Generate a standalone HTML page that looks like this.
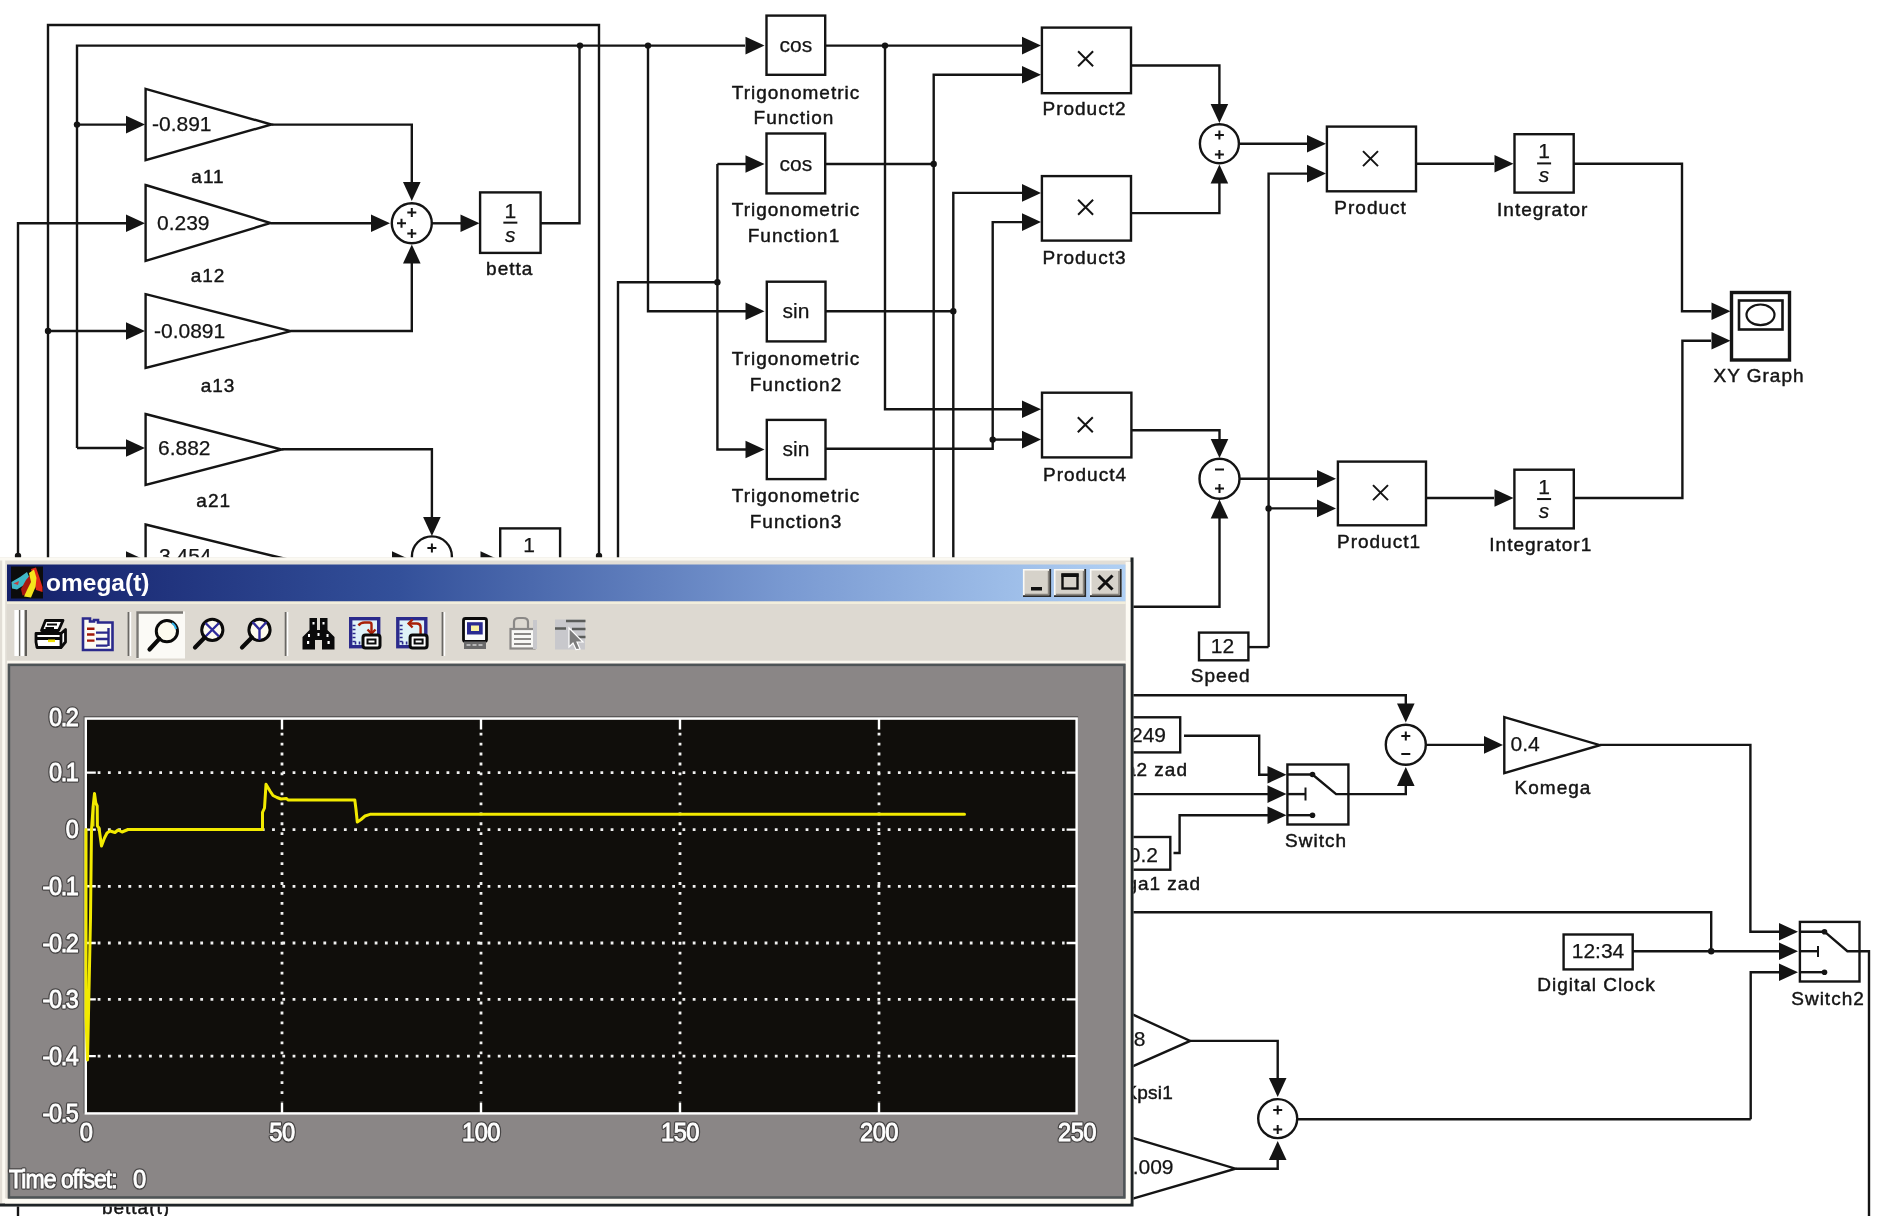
<!DOCTYPE html>
<html><head><meta charset="utf-8">
<style>
html,body{margin:0;padding:0;background:#fff;}
body{width:1890px;height:1216px;overflow:hidden;position:relative;font-family:"Liberation Sans",sans-serif;}
svg{position:absolute;left:0;top:0;will-change:transform;}
#dg polyline,#dg rect,#dg polygon,#dg circle{fill:none;stroke:#141414;stroke-width:2.4;stroke-linejoin:miter;}
#dg .a{fill:#141414;stroke:none;}
#dg .sg{stroke:#141414;stroke-width:2;fill:none;}
#dg .tm{stroke:#141414;stroke-width:2;fill:none;}
#dg text{fill:#141414;font-family:"Liberation Sans",sans-serif;}
#dg .lb{font-size:19px;letter-spacing:1px;stroke:#141414;stroke-width:0.45px;}
#dg .vl{font-size:21px;stroke:#141414;stroke-width:0.25px;}
#dg .it{font-style:italic;}
#wn .pl{font-family:"Liberation Sans",sans-serif;font-size:25.5px;fill:#fff;stroke:#fff;stroke-width:0.9px;}
#wn .plh{font-family:"Liberation Sans",sans-serif;font-size:25.5px;fill:none;stroke:#474545;stroke-width:3.6px;stroke-linejoin:round;}
</style></head><body>
<svg id="dg" width="1890" height="1216" viewBox="0 0 1890 1216">
<polyline points="48,560 48,25 599,25 599,560"/>
<circle class="a" cx="599" cy="556" r="3.2"/>
<polyline points="77,448 77,45.6 745,45.6"/>
<circle class="a" cx="580" cy="45.6" r="3.2"/>
<circle class="a" cx="648" cy="45.6" r="3.2"/>
<polyline points="18,560 18,223.3 127,223.3"/>
<polygon class="a" points="145.0,223.3 126.0,214.5 126.0,232.1"/>
<circle class="a" cx="18" cy="556" r="3.2"/>
<polyline points="77,124.6 127,124.6"/>
<polygon class="a" points="145.0,124.6 126.0,115.8 126.0,133.4"/>
<circle class="a" cx="77" cy="124.6" r="3.2"/>
<polygon points="145.6,88.8 271.4,124.5 145.6,160.2"/>
<text class="vl" x="152" y="131" text-anchor="start">-0.891</text>
<text class="lb" x="208" y="182.6" text-anchor="middle">a11</text>
<polyline points="271.4,124.6 411.8,124.6 411.8,184"/>
<polygon class="a" points="411.8,201.0 403.0,182.0 420.6,182.0"/>
<polygon points="145.6,185 270.5,223.0 145.6,261"/>
<text class="vl" x="157" y="230" text-anchor="start">0.239</text>
<text class="lb" x="208" y="282" text-anchor="middle">a12</text>
<polyline points="270.5,223.3 372,223.3"/>
<polygon class="a" points="390.0,223.3 371.0,214.5 371.0,232.1"/>
<polyline points="48,331 127,331"/>
<polygon class="a" points="145.0,331.0 126.0,322.2 126.0,339.8"/>
<circle class="a" cx="48" cy="331" r="3.2"/>
<polygon points="145.6,294.2 290.8,331.04999999999995 145.6,367.9"/>
<text class="vl" x="154" y="338" text-anchor="start">-0.0891</text>
<text class="lb" x="218" y="391.6" text-anchor="middle">a13</text>
<polyline points="290.8,331 411.8,331 411.8,262"/>
<polygon class="a" points="411.8,244.5 403.0,263.5 420.6,263.5"/>
<circle cx="411.8" cy="223.3" r="20"/>
<path class="sg" d="M407.3,212.5H416.3M411.8,208.0V217.0"/>
<path class="sg" d="M397.0,223.3H406.0M401.5,218.8V227.8"/>
<path class="sg" d="M407.3,233.5H416.3M411.8,229.0V238.0"/>
<polyline points="431.8,223.3 461,223.3"/>
<polygon class="a" points="479.5,223.3 460.5,214.5 460.5,232.1"/>
<rect x="480.1" y="192.4" width="60.5" height="60.5"/>
<text class="vl" x="510.35" y="217.65" text-anchor="middle">1</text>
<path class="sg" d="M503.35,222.65H517.35"/>
<text class="vl it" x="510.35" y="241.65" text-anchor="middle">s</text>
<text class="lb" x="509.7" y="275" text-anchor="middle">betta</text>
<polyline points="540.6,223.3 579.5,223.3 579.5,45.6"/>
<polyline points="77,448 127,448"/>
<polygon class="a" points="145.0,448.0 126.0,439.2 126.0,456.8"/>
<polygon points="145.6,414 281.6,449.5 145.6,485"/>
<text class="vl" x="158" y="455" text-anchor="start">6.882</text>
<text class="lb" x="213.7" y="507" text-anchor="middle">a21</text>
<polyline points="281.6,449.2 431.9,449.2 431.9,519"/>
<polygon class="a" points="431.9,536.0 423.1,517.0 440.7,517.0"/>
<circle cx="431.9" cy="556.4" r="20"/>
<path class="sg" d="M427.4,548H436.4M431.9,543.5V552.5"/>
<polygon class="a" points="411.0,560.0 392.0,551.2 392.0,568.8"/>
<polyline points="380,560 392,560"/>
<polygon points="145.6,524.5 290,560.0 145.6,595.5"/>
<text class="vl" x="159" y="563" text-anchor="start">3.454</text>
<polygon class="a" points="145.0,560.0 126.0,551.2 126.0,568.8"/>
<polyline points="461,560 481,560"/>
<polygon class="a" points="499.5,560.0 480.5,551.2 480.5,568.8"/>
<rect x="500.2" y="528.4" width="59.900000000000034" height="61.60000000000002"/>
<text class="vl" x="529" y="551.5" text-anchor="middle">1</text>
<polyline points="618,560 618,282.2 717.4,282.2"/>
<circle class="a" cx="717.4" cy="282.2" r="3.2"/>
<polyline points="717.4,164 717.4,449.5 746,449.5"/>
<polygon class="a" points="764.5,449.5 745.5,440.7 745.5,458.3"/>
<polyline points="717.4,164 746,164"/>
<polygon class="a" points="764.5,164.0 745.5,155.2 745.5,172.8"/>
<polygon class="a" points="764.5,45.6 745.5,36.8 745.5,54.4"/>
<polyline points="648,45.6 648,311.3 746,311.3"/>
<polygon class="a" points="764.5,311.3 745.5,302.5 745.5,320.1"/>
<rect x="766.5" y="15.6" width="58.700000000000045" height="59.199999999999996"/>
<text class="vl" x="795.8" y="52" text-anchor="middle">cos</text>
<rect x="766.5" y="133.5" width="58.700000000000045" height="59.900000000000006"/>
<text class="vl" x="795.8" y="170.5" text-anchor="middle">cos</text>
<rect x="766.8" y="281.7" width="58.700000000000045" height="59.69999999999999"/>
<text class="vl" x="796" y="318" text-anchor="middle">sin</text>
<rect x="766.8" y="419.9" width="58.700000000000045" height="59.200000000000045"/>
<text class="vl" x="796" y="456" text-anchor="middle">sin</text>
<text class="lb" x="796" y="99" text-anchor="middle">Trigonometric</text>
<text class="lb" x="794" y="124.3" text-anchor="middle">Function</text>
<text class="lb" x="796" y="216.4" text-anchor="middle">Trigonometric</text>
<text class="lb" x="794" y="241.7" text-anchor="middle">Function1</text>
<text class="lb" x="796" y="364.9" text-anchor="middle">Trigonometric</text>
<text class="lb" x="796" y="390.8" text-anchor="middle">Function2</text>
<text class="lb" x="796" y="502" text-anchor="middle">Trigonometric</text>
<text class="lb" x="796" y="527.6" text-anchor="middle">Function3</text>
<polyline points="825.2,45.6 1022,45.6"/>
<polygon class="a" points="1041.0,45.6 1022.0,36.8 1022.0,54.4"/>
<circle class="a" cx="885" cy="45.6" r="3.2"/>
<polyline points="885,45.6 885,409.3 1022,409.3"/>
<polygon class="a" points="1041.0,409.3 1022.0,400.5 1022.0,418.1"/>
<polyline points="825.2,164 933.7,164"/>
<circle class="a" cx="933.7" cy="164" r="3.2"/>
<polyline points="933.7,560 933.7,74.8 1022,74.8"/>
<polygon class="a" points="1041.0,74.8 1022.0,66.0 1022.0,83.6"/>
<polyline points="825.5,311.3 953.3,311.3"/>
<circle class="a" cx="953.3" cy="311.3" r="3.2"/>
<polyline points="953.3,560 953.3,192.9 1022,192.9"/>
<polygon class="a" points="1041.0,192.9 1022.0,184.1 1022.0,201.7"/>
<polyline points="825.5,448.8 992.7,448.8 992.7,222.1 1022,222.1"/>
<polygon class="a" points="1041.0,222.1 1022.0,213.3 1022.0,230.9"/>
<polyline points="992.7,439.6 1022,439.6"/>
<polygon class="a" points="1041.0,439.6 1022.0,430.8 1022.0,448.4"/>
<circle class="a" cx="992.7" cy="439.6" r="3.2"/>
<rect x="1041.9" y="27.6" width="89.09999999999991" height="65.6"/>
<path class="tm" d="M1078.1,51.2L1093.1,66.2M1093.1,51.2L1078.1,66.2"/>
<text class="lb" x="1084.5" y="115" text-anchor="middle">Product2</text>
<rect x="1041.9" y="176.1" width="89.09999999999991" height="64.5"/>
<path class="tm" d="M1078.1,199.7L1093.1,214.7M1093.1,199.7L1078.1,214.7"/>
<text class="lb" x="1084.5" y="263.6" text-anchor="middle">Product3</text>
<rect x="1042" y="392.7" width="89.40000000000009" height="64.69999999999999"/>
<path class="tm" d="M1077.8,417.3L1092.8,432.3M1092.8,417.3L1077.8,432.3"/>
<text class="lb" x="1085" y="480.8" text-anchor="middle">Product4</text>
<polyline points="1131,65.5 1219.4,65.5 1219.4,104"/>
<polygon class="a" points="1219.4,123.0 1210.6,104.0 1228.2,104.0"/>
<polyline points="1131,213.1 1219.4,213.1 1219.4,183"/>
<polygon class="a" points="1219.4,164.5 1210.6,183.5 1228.2,183.5"/>
<circle cx="1219.4" cy="143.7" r="19.5"/>
<path class="sg" d="M1214.9,135H1223.9M1219.4,130.5V139.5"/>
<path class="sg" d="M1214.9,154.5H1223.9M1219.4,150.0V159.0"/>
<polyline points="1239,143.7 1307,143.7"/>
<polygon class="a" points="1326.0,143.7 1307.0,134.9 1307.0,152.5"/>
<rect x="1326.9" y="126.6" width="89.09999999999991" height="64.70000000000002"/>
<path class="tm" d="M1363.0,151.1L1378.0,166.1M1378.0,151.1L1363.0,166.1"/>
<text class="lb" x="1370.6" y="214.2" text-anchor="middle">Product</text>
<polyline points="1268.6,647.1 1268.6,173.6 1307,173.6"/>
<polygon class="a" points="1326.0,173.6 1307.0,164.8 1307.0,182.4"/>
<polyline points="1416,163.7 1494,163.7"/>
<polygon class="a" points="1513.5,163.7 1494.5,154.9 1494.5,172.5"/>
<rect x="1514.5" y="134.2" width="59.200000000000045" height="58.400000000000006"/>
<text class="vl" x="1544.1" y="158.39999999999998" text-anchor="middle">1</text>
<path class="sg" d="M1537.1,163.39999999999998H1551.1"/>
<text class="vl it" x="1544.1" y="182.39999999999998" text-anchor="middle">s</text>
<text class="lb" x="1542.7" y="216" text-anchor="middle">Integrator</text>
<polyline points="1573.7,163.7 1682,163.7 1682,311.3 1711,311.3"/>
<polygon class="a" points="1730.5,311.3 1711.5,302.5 1711.5,320.1"/>
<polyline points="1573.8,498 1682.4,498 1682.4,340.8 1711,340.8"/>
<polygon class="a" points="1730.5,340.8 1711.5,332.0 1711.5,349.6"/>
<rect x="1731.5" y="292.5" width="58" height="67.5" style="stroke-width:3.4"/>
<rect x="1739" y="300.5" width="43.5" height="29" style="stroke-width:2.6"/>
<ellipse cx="1760.5" cy="314.8" rx="14" ry="10.3" style="fill:none;stroke:#141414;stroke-width:2.2"/>
<text class="lb" x="1759" y="381.5" text-anchor="middle">XY Graph</text>
<polyline points="1131.4,430.2 1219.5,430.2 1219.5,439"/>
<polygon class="a" points="1219.5,458.0 1210.7,439.0 1228.3,439.0"/>
<circle cx="1219.5" cy="478.7" r="20"/>
<path class="sg" d="M1215.0,469.5H1224.0"/>
<path class="sg" d="M1215.0,488.5H1224.0M1219.5,484.0V493.0"/>
<polyline points="1132,606.8 1219.5,606.8 1219.5,518"/>
<polygon class="a" points="1219.5,499.5 1210.7,518.5 1228.3,518.5"/>
<polyline points="1239.5,478.7 1317,478.7"/>
<polygon class="a" points="1336.0,478.7 1317.0,469.9 1317.0,487.5"/>
<rect x="1337.9" y="461.6" width="88.09999999999991" height="63.69999999999993"/>
<path class="tm" d="M1373.0,485.1L1388.0,500.1M1388.0,485.1L1373.0,500.1"/>
<text class="lb" x="1379" y="548.4" text-anchor="middle">Product1</text>
<polyline points="1268.6,508.4 1317,508.4"/>
<polygon class="a" points="1336.0,508.4 1317.0,499.6 1317.0,517.2"/>
<circle class="a" cx="1268.6" cy="508.4" r="3.2"/>
<polyline points="1426,498 1494,498"/>
<polygon class="a" points="1513.5,498.0 1494.5,489.2 1494.5,506.8"/>
<rect x="1514.4" y="469.7" width="59.399999999999864" height="58.69999999999999"/>
<text class="vl" x="1544.1" y="494.04999999999995" text-anchor="middle">1</text>
<path class="sg" d="M1537.1,499.04999999999995H1551.1"/>
<text class="vl it" x="1544.1" y="518.05" text-anchor="middle">s</text>
<text class="lb" x="1540.8" y="551" text-anchor="middle">Integrator1</text>
<rect x="1199" y="632.6" width="49.40000000000009" height="27.699999999999932"/>
<text class="vl" x="1222.5" y="653" text-anchor="middle">12</text>
<polyline points="1248.4,647.1 1268.6,647.1"/>
<text class="lb" x="1220.7" y="682" text-anchor="middle">Speed</text>
<polyline points="1132,695.2 1405.8,695.2 1405.8,705"/>
<polygon class="a" points="1405.8,722.5 1397.0,703.5 1414.6,703.5"/>
<circle cx="1405.8" cy="744.7" r="20"/>
<path class="sg" d="M1401.3,736H1410.3M1405.8,731.5V740.5"/>
<path class="sg" d="M1401.3,754H1410.3"/>
<polyline points="1351,794.1 1405.8,794.1 1405.8,784"/>
<polygon class="a" points="1405.8,767.0 1397.0,786.0 1414.6,786.0"/>
<polyline points="1426,744.9 1484,744.9"/>
<polygon class="a" points="1503.0,744.9 1484.0,736.1 1484.0,753.7"/>
<polygon points="1504.3,717.2 1600,745.1500000000001 1504.3,773.1"/>
<text class="vl" x="1510.5" y="750.5" text-anchor="start">0.4</text>
<text class="lb" x="1553" y="793.5" text-anchor="middle">Komega</text>
<polyline points="1600,744.9 1750.4,744.9 1750.4,931.7 1779,931.7"/>
<polygon class="a" points="1798.0,931.7 1779.0,922.9 1779.0,940.5"/>
<rect x="1100" y="717.3" width="80.20000000000005" height="35.10000000000002"/>
<text class="vl" x="1166" y="742" text-anchor="end">249</text>
<text class="lb" x="1188" y="775.5" text-anchor="end">a2 zad</text>
<polyline points="1184,735.8 1259.2,735.8 1259.2,774.7 1268,774.7"/>
<polygon class="a" points="1286.5,774.7 1267.5,765.9 1267.5,783.5"/>
<polyline points="1132,794.1 1268,794.1"/>
<polygon class="a" points="1286.5,794.1 1267.5,785.3 1267.5,802.9"/>
<rect x="1100" y="837" width="70.29999999999995" height="32.700000000000045"/>
<text class="vl" x="1158" y="862" text-anchor="end">0.2</text>
<text class="lb" x="1201" y="890" text-anchor="end">ga1 zad</text>
<polyline points="1173.5,853 1179.6,853 1179.6,815.2 1268,815.2"/>
<polygon class="a" points="1286.5,815.2 1267.5,806.4 1267.5,824.0"/>
<text class="lb" x="1201" y="890" text-anchor="end"></text>
<rect x="1287.4" y="764.5" width="61.0" height="60.0"/>
<polyline points="1287.4,774.5 1312.5,774.5 1336.1,794.1 1351,794.1"/>
<circle class="a" cx="1312.5" cy="774.5" r="2.8"/>
<polyline points="1287.4,794.1 1305.5,794.1"/>
<path class="sg" d="M1305.5,787.5V800.5"/>
<polyline points="1287.4,815.2 1312.5,815.2"/>
<circle class="a" cx="1312.5" cy="815.2" r="2.8"/>
<text class="lb" x="1316" y="847" text-anchor="middle">Switch</text>
<polyline points="1132,912.3 1711.2,912.3 1711.2,951.2"/>
<circle class="a" cx="1711.2" cy="951.2" r="3.2"/>
<rect x="1563.6" y="934.5" width="69.10000000000014" height="34.89999999999998"/>
<text class="vl" x="1598" y="957.5" text-anchor="middle">12:34</text>
<text class="lb" x="1596.5" y="991" text-anchor="middle">Digital Clock</text>
<polyline points="1632.7,951.2 1779,951.2"/>
<polygon class="a" points="1798.0,951.2 1779.0,942.4 1779.0,960.0"/>
<polyline points="1750.7,1119.3 1750.7,972.2 1779,972.2"/>
<polygon class="a" points="1798.0,972.2 1779.0,963.4 1779.0,981.0"/>
<rect x="1799.9" y="921.9" width="59.59999999999991" height="59.60000000000002"/>
<polyline points="1799.9,931.7 1824.5,931.7 1847.4,951.2 1869,951.2 1869,1216"/>
<circle class="a" cx="1824.5" cy="931.7" r="2.8"/>
<polyline points="1799.9,951.2 1818,951.2"/>
<path class="sg" d="M1818,946V957"/>
<polyline points="1799.9,972.2 1824.5,972.2"/>
<circle class="a" cx="1824.5" cy="972.2" r="2.8"/>
<text class="lb" x="1828" y="1005" text-anchor="middle">Switch2</text>
<polyline points="1132,1014.2 1190.2,1040.9 1132,1066.6"/>
<text class="vl" x="1145.5" y="1046" text-anchor="end">8</text>
<text class="lb" x="1173" y="1098.5" text-anchor="end" style="letter-spacing:0.2px">Kpsi1</text>
<polyline points="1190.2,1040.9 1277.7,1040.9 1277.7,1081"/>
<polygon class="a" points="1277.7,1097.0 1268.9,1078.0 1286.5,1078.0"/>
<circle cx="1277.7" cy="1118.6" r="19.5"/>
<path class="sg" d="M1273.2,1110H1282.2M1277.7,1105.5V1114.5"/>
<path class="sg" d="M1273.2,1129.5H1282.2M1277.7,1125.0V1134.0"/>
<polyline points="1132,1137.7 1235.5,1168.7 1132,1198.9"/>
<text class="vl" x="1173.5" y="1174" text-anchor="end">.009</text>
<polyline points="1235.5,1168.7 1277.7,1168.7 1277.7,1157.5"/>
<polygon class="a" points="1277.7,1141.0 1268.9,1160.0 1286.5,1160.0"/>
<polyline points="1297.2,1119.3 1750.7,1119.3"/>
<polyline points="18,1200 18,1216"/>
<text class="lb" x="136" y="1213.5" text-anchor="middle">betta(t)</text>
</svg>
<svg id="wn" width="1890" height="1216" viewBox="0 0 1890 1216" style="position:absolute;left:0;top:0">
<defs><linearGradient id="tg" x1="0" x2="1" y1="0" y2="0"><stop offset="0" stop-color="#14206a"/><stop offset="0.35" stop-color="#33509a"/><stop offset="0.7" stop-color="#7a9ad2"/><stop offset="1" stop-color="#b0d0f4"/></linearGradient></defs>
<rect x="0" y="557.5" width="1133.5" height="649" fill="#e2ded6"/>
<path d="M0,559H1131M3.7,559V1203" stroke="#fbf9f2" stroke-width="3" fill="none"/>
<path d="M1132,557.5V1206.5M0,1205H1133.5" stroke="#1e2426" stroke-width="3" fill="none"/>
<path d="M1128,562V1203.5M5,1201H1130" stroke="#fdfbf4" stroke-width="4.8" fill="none"/>
<rect x="7" y="564.5" width="1118.5" height="37" fill="url(#tg)"/>
<rect x="7" y="601.5" width="1118.5" height="2.5" fill="#f2eedc"/>
<rect x="7" y="604" width="1118.5" height="57" fill="#ddd9d1"/>
<rect x="7" y="660.7" width="1118.5" height="3" fill="#fbf8ef"/>
<rect x="7.8" y="663.7" width="1117.7" height="534.9" fill="#8a8686"/>
<rect x="9" y="664.9" width="1115.3" height="532.5" fill="none" stroke="#4e5456" stroke-width="2.4"/>
<rect x="11" y="566.5" width="32" height="32" fill="#0c0c0c"/>
<path d="M11.5,582 L20,577 L27,572 L29.5,578 L24,585 L17,589.5 L12,588.5 Z" fill="#40b8c8"/>
<path d="M13.5,583.5 L19,581 L18,585 Z" fill="#c04040"/>
<path d="M21,589 L26,580 L31,574 L33,582 L29,594 L22.5,595.5 Z" fill="#a81810"/>
<path d="M31,569 L36,567.5 L39,576 L42.5,587 L42.5,592 L36,590 L34,580 Z" fill="#e02818"/>
<path d="M29,573 L34,569.5 L36.5,578 L35.5,587 L31,597.5 L24,596.5 L27,590 L31,582 Z" fill="#f4e41c"/>
<text x="46" y="591" font-family="Liberation Sans" font-weight="bold" font-size="24.5" fill="#ffffff">omega(t)</text>
<rect x="1023" y="569" width="28" height="28" fill="#d6d2ca"/>
<path d="M1023.7,597V569.7H1051" stroke="#fbfaf6" stroke-width="1.6" fill="none"/>
<path d="M1023,596.2H1050.2V569" stroke="#2a2a2a" stroke-width="1.8" fill="none"/>
<path d="M1025,594.5H1048.5V571" stroke="#8a8680" stroke-width="1.4" fill="none"/>
<rect x="1031" y="587" width="11" height="3.5" fill="#101010"/>
<rect x="1054" y="569" width="32" height="28" fill="#d6d2ca"/>
<path d="M1054.7,597V569.7H1086" stroke="#fbfaf6" stroke-width="1.6" fill="none"/>
<path d="M1054,596.2H1085.2V569" stroke="#2a2a2a" stroke-width="1.8" fill="none"/>
<path d="M1056,594.5H1083.5V571" stroke="#8a8680" stroke-width="1.4" fill="none"/>
<rect x="1062.5" y="574.5" width="15" height="14" fill="none" stroke="#101010" stroke-width="2.4"/>
<rect x="1061.5" y="573.5" width="17" height="3.5" fill="#101010"/>
<rect x="1090" y="569" width="31.5" height="28" fill="#d6d2ca"/>
<path d="M1090.7,597V569.7H1121.5" stroke="#fbfaf6" stroke-width="1.6" fill="none"/>
<path d="M1090,596.2H1120.7V569" stroke="#2a2a2a" stroke-width="1.8" fill="none"/>
<path d="M1092,594.5H1119.0V571" stroke="#8a8680" stroke-width="1.4" fill="none"/>
<path d="M1098.5,575.5L1112.5,589.5M1112.5,575.5L1098.5,589.5" stroke="#101010" stroke-width="3"/>
<path d="M84.3,1113.4 V716.8000000000001 H1078.1" stroke="#5a5858" stroke-width="1.6" fill="none"/>
<rect x="85.8" y="718.6" width="990.8" height="394.80000000000007" fill="#100e0b" stroke="#ffffff" stroke-width="2.4"/>
<path d="M282,732.7V1101.4" stroke="#f0f0f0" stroke-width="2.8" stroke-dasharray="2.8 7.16" fill="none"/>
<path d="M282,718.6V729.6M282,1113.4V1102.4" stroke="#ffffff" stroke-width="2.4" fill="none"/>
<path d="M481,732.7V1101.4" stroke="#f0f0f0" stroke-width="2.8" stroke-dasharray="2.8 7.16" fill="none"/>
<path d="M481,718.6V729.6M481,1113.4V1102.4" stroke="#ffffff" stroke-width="2.4" fill="none"/>
<path d="M680,732.7V1101.4" stroke="#f0f0f0" stroke-width="2.8" stroke-dasharray="2.8 7.16" fill="none"/>
<path d="M680,718.6V729.6M680,1113.4V1102.4" stroke="#ffffff" stroke-width="2.4" fill="none"/>
<path d="M879,732.7V1101.4" stroke="#f0f0f0" stroke-width="2.8" stroke-dasharray="2.8 7.16" fill="none"/>
<path d="M879,718.6V729.6M879,1113.4V1102.4" stroke="#ffffff" stroke-width="2.4" fill="none"/>
<path d="M97.66,772.6H1064.6" stroke="#f0f0f0" stroke-width="2.8" stroke-dasharray="2.8 7.46" fill="none"/>
<path d="M85.8,772.6H95.8M1076.6,772.6H1066.6" stroke="#ffffff" stroke-width="2.4" fill="none"/>
<path d="M97.66,829.6H1064.6" stroke="#f0f0f0" stroke-width="2.8" stroke-dasharray="2.8 7.46" fill="none"/>
<path d="M85.8,829.6H95.8M1076.6,829.6H1066.6" stroke="#ffffff" stroke-width="2.4" fill="none"/>
<path d="M97.66,886.3H1064.6" stroke="#f0f0f0" stroke-width="2.8" stroke-dasharray="2.8 7.46" fill="none"/>
<path d="M85.8,886.3H95.8M1076.6,886.3H1066.6" stroke="#ffffff" stroke-width="2.4" fill="none"/>
<path d="M97.66,943H1064.6" stroke="#f0f0f0" stroke-width="2.8" stroke-dasharray="2.8 7.46" fill="none"/>
<path d="M85.8,943H95.8M1076.6,943H1066.6" stroke="#ffffff" stroke-width="2.4" fill="none"/>
<path d="M97.66,999.4H1064.6" stroke="#f0f0f0" stroke-width="2.8" stroke-dasharray="2.8 7.46" fill="none"/>
<path d="M85.8,999.4H95.8M1076.6,999.4H1066.6" stroke="#ffffff" stroke-width="2.4" fill="none"/>
<path d="M97.66,1056.1H1064.6" stroke="#f0f0f0" stroke-width="2.8" stroke-dasharray="2.8 7.46" fill="none"/>
<path d="M85.8,1056.1H95.8M1076.6,1056.1H1066.6" stroke="#ffffff" stroke-width="2.4" fill="none"/>
<text class="plh" transform="translate(77.5,726.3) scale(0.92,1)" text-anchor="end" letter-spacing="-1.5">0.2</text>
<text class="pl" transform="translate(77.5,726.3) scale(0.92,1)" text-anchor="end" letter-spacing="-1.5">0.2</text>
<text class="plh" transform="translate(77.5,781.4) scale(0.92,1)" text-anchor="end" letter-spacing="-1.5">0.1</text>
<text class="pl" transform="translate(77.5,781.4) scale(0.92,1)" text-anchor="end" letter-spacing="-1.5">0.1</text>
<text class="plh" transform="translate(77.5,838.4) scale(0.92,1)" text-anchor="end" letter-spacing="-1.5">0</text>
<text class="pl" transform="translate(77.5,838.4) scale(0.92,1)" text-anchor="end" letter-spacing="-1.5">0</text>
<text class="plh" transform="translate(77.5,895.0999999999999) scale(0.92,1)" text-anchor="end" letter-spacing="-1.5">-0.1</text>
<text class="pl" transform="translate(77.5,895.0999999999999) scale(0.92,1)" text-anchor="end" letter-spacing="-1.5">-0.1</text>
<text class="plh" transform="translate(77.5,951.8) scale(0.92,1)" text-anchor="end" letter-spacing="-1.5">-0.2</text>
<text class="pl" transform="translate(77.5,951.8) scale(0.92,1)" text-anchor="end" letter-spacing="-1.5">-0.2</text>
<text class="plh" transform="translate(77.5,1008.1999999999999) scale(0.92,1)" text-anchor="end" letter-spacing="-1.5">-0.3</text>
<text class="pl" transform="translate(77.5,1008.1999999999999) scale(0.92,1)" text-anchor="end" letter-spacing="-1.5">-0.3</text>
<text class="plh" transform="translate(77.5,1064.8999999999999) scale(0.92,1)" text-anchor="end" letter-spacing="-1.5">-0.4</text>
<text class="pl" transform="translate(77.5,1064.8999999999999) scale(0.92,1)" text-anchor="end" letter-spacing="-1.5">-0.4</text>
<text class="plh" transform="translate(77.5,1122.3) scale(0.92,1)" text-anchor="end" letter-spacing="-1.5">-0.5</text>
<text class="pl" transform="translate(77.5,1122.3) scale(0.92,1)" text-anchor="end" letter-spacing="-1.5">-0.5</text>
<text class="plh" transform="translate(86,1141) scale(0.93,1)" text-anchor="middle" letter-spacing="-0.5">0</text>
<text class="pl" transform="translate(86,1141) scale(0.93,1)" text-anchor="middle" letter-spacing="-0.5">0</text>
<text class="plh" transform="translate(282,1141) scale(0.93,1)" text-anchor="middle" letter-spacing="-0.5">50</text>
<text class="pl" transform="translate(282,1141) scale(0.93,1)" text-anchor="middle" letter-spacing="-0.5">50</text>
<text class="plh" transform="translate(481,1141) scale(0.93,1)" text-anchor="middle" letter-spacing="-0.5">100</text>
<text class="pl" transform="translate(481,1141) scale(0.93,1)" text-anchor="middle" letter-spacing="-0.5">100</text>
<text class="plh" transform="translate(680,1141) scale(0.93,1)" text-anchor="middle" letter-spacing="-0.5">150</text>
<text class="pl" transform="translate(680,1141) scale(0.93,1)" text-anchor="middle" letter-spacing="-0.5">150</text>
<text class="plh" transform="translate(879,1141) scale(0.93,1)" text-anchor="middle" letter-spacing="-0.5">200</text>
<text class="pl" transform="translate(879,1141) scale(0.93,1)" text-anchor="middle" letter-spacing="-0.5">200</text>
<text class="plh" transform="translate(1077,1141) scale(0.93,1)" text-anchor="middle" letter-spacing="-0.5">250</text>
<text class="pl" transform="translate(1077,1141) scale(0.93,1)" text-anchor="middle" letter-spacing="-0.5">250</text>
<text class="plh" transform="translate(9,1187.8) scale(0.9,1)" text-anchor="start" letter-spacing="-1">Time offset:</text>
<text class="pl" transform="translate(9,1187.8) scale(0.9,1)" text-anchor="start" letter-spacing="-1">Time offset:</text>
<text class="plh" transform="translate(133,1187.8) scale(0.93,1)" text-anchor="start" letter-spacing="0">0</text>
<text class="pl" transform="translate(133,1187.8) scale(0.93,1)" text-anchor="start" letter-spacing="0">0</text>
<path d="M93.2,806 V826.5" stroke="#d8d000" stroke-width="2.6"/>
<path d="M86,829.5 L86,1016 L87.5,1060 L89,990 L90.5,918 L91.5,829.5 L93.2,806 L94.5,793.5 L95.8,803 L97.2,806 L97.4,826 L99,828 L101.5,846 L104.5,838 L107,833 L110,831 L115,832.5 L118,830 L122,832 L128,829.5 L262.5,829.5 L262.5,812.4 L264.5,808 L266,784.3 L270,791 L273,795.5 L277,797.5 L281,799 L286.5,798.5 L288,800 L354.8,800 L356,809.5 L357.3,822 L361,819.5 L365,816 L370,814.3 L964.5,814.3" stroke="#f2ea00" stroke-width="3" fill="none" stroke-linejoin="round" stroke-linecap="round"/>
<rect x="14.4" y="610" width="4.5" height="46" fill="#ffffff"/><rect x="18.9" y="610" width="1.6" height="46" fill="#6e6c68"/>
<rect x="20.5" y="610" width="4.1" height="46" fill="#ffffff"/><rect x="24.6" y="610" width="2.4" height="46" fill="#5e5c58"/>
<rect x="127.6" y="612" width="2" height="44" fill="#6a6864"/><rect x="129.6" y="612" width="1.6" height="44" fill="#ffffff"/>
<rect x="284.7" y="612" width="2" height="44" fill="#6a6864"/><rect x="286.7" y="612" width="1.6" height="44" fill="#ffffff"/>
<rect x="441.6" y="612" width="2" height="44" fill="#6a6864"/><rect x="443.6" y="612" width="1.6" height="44" fill="#ffffff"/>
<g stroke="#0a0a0a" stroke-width="2.8" stroke-linejoin="round" fill="#ffffff"><path d="M45.5,620.5 H63 L58.5,630.5 H41.5 Z"/><path d="M36,633.5 H61 L65.5,629.5 V642 L61,647.5 H37 L36,642 Z"/><path d="M36,638.5 H61 M61,633.5 V647.5" fill="none"/><path d="M47,624.5 H57 M45.5,628 H54" fill="none" stroke-width="2.2"/></g>
<rect x="48" y="639.5" width="7" height="2.6" fill="#f0e000"/>
<path d="M83,618.5 H90 V621.5 H94 V620 H98 V622.5 H112.5 V650 H83 Z" fill="#fbfbf4" stroke="#2b2a8c" stroke-width="2.6"/>
<path d="M87,628.8 H94.5 M87,634.5 H94.5 M87,640.6 H94.5" stroke="#a01808" stroke-width="2.4"/>
<path d="M96,632.6 H107.5 M96,639 H107.5 M96,645.6 H107.5 M108.5,628 V646" stroke="#2b2a8c" stroke-width="2.4"/>
<rect x="136.5" y="611.5" width="48.5" height="47" fill="#fbfaf6"/>
<path d="M137.5,658 V612.5 H183" stroke="#7a7874" stroke-width="2.4" fill="none"/>
<circle cx="166.9" cy="631.2" r="10.6" fill="#fdfbef" stroke="#0a0a0a" stroke-width="3"/>
<path d="M172,623 a9,9 0 0 1 4,6" stroke="#30b0e8" stroke-width="2" fill="none"/>
<path d="M149.5,649.5 L159.3,638.8000000000001" stroke="#0a0a0a" stroke-width="4.2" stroke-linecap="round"/>
<circle cx="212.3" cy="629.9" r="10.6" fill="#fdfbef" stroke="#0a0a0a" stroke-width="3"/>
<path d="M205.5,623 L219,636.5 M219,623 L205.5,636.5" stroke="#2e2a9a" stroke-width="2.4"/>
<path d="M195,647.5 L204.70000000000002,637.5" stroke="#0a0a0a" stroke-width="4.2" stroke-linecap="round"/>
<circle cx="259.5" cy="629.9" r="10.6" fill="#fdfbef" stroke="#0a0a0a" stroke-width="3"/>
<path d="M252.5,622 L259.5,629.5 L266.5,622 M259.5,629.5 V640" stroke="#2e2a9a" stroke-width="2.4" fill="none"/>
<path d="M242,647.5 L251.9,637.5" stroke="#0a0a0a" stroke-width="4.2" stroke-linecap="round"/>
<path d="M309.5,618 H317 V630 H320 V618 H327.5 V630 L334.5,637 V649.5 H322 V640 H315 V649.5 H302.5 V637 L309.5,630 Z" fill="#0a0a0a"/>
<g fill="#ffffff"><rect x="312.5" y="622" width="2" height="2.5"/><rect x="322.5" y="622" width="2" height="2.5"/><rect x="308" y="634" width="2" height="3"/><rect x="317.5" y="633" width="2" height="3"/><rect x="326.5" y="634" width="2" height="3"/><rect x="307" y="641" width="2.2" height="3"/><rect x="327.5" y="641" width="2.2" height="3"/></g>
<rect x="350.7" y="618.7" width="28" height="28" fill="#dff2f8" stroke="#2b2a8c" stroke-width="3.4"/>
<path d="M352.5,625.5 h3 M352.5,629.5 h3 M352.5,633.5 h3 M352.5,637.5 h3 M352.5,641.5 h3 M355.5,644.5 v-3 M359.5,644.5 v-3" stroke="#2b2a8c" stroke-width="1.6"/>
<path d="M358.5,625.5 q2,-3 6,-3 h5 q2,0 2,2 v8" stroke="#a82008" stroke-width="2.4" fill="none"/><path d="M367.5,629.5 l4,4 l4,-4" stroke="#a82008" stroke-width="2.4" fill="none"/>
<rect x="363.0" y="635.0" width="17" height="13" rx="2.5" fill="#ffffff" stroke="#0a0a0a" stroke-width="3"/>
<rect x="367.5" y="639.5" width="8" height="4" fill="none" stroke="#0a0a0a" stroke-width="2"/>
<rect x="397.8" y="618.7" width="28" height="28" fill="#dff2f8" stroke="#2b2a8c" stroke-width="3.4"/>
<path d="M399.6,625.5 h3 M399.6,629.5 h3 M399.6,633.5 h3 M399.6,637.5 h3 M399.6,641.5 h3 M402.6,644.5 v-3 M406.6,644.5 v-3" stroke="#2b2a8c" stroke-width="1.6"/>
<path d="M409.6,623.5 h7 q4,0 4,4 v7" stroke="#a82008" stroke-width="2.4" fill="none"/><path d="M412.6,619.5 l-4,4 l4,4" stroke="#a82008" stroke-width="2.4" fill="none"/>
<rect x="410.1" y="635.0" width="17" height="13" rx="2.5" fill="#ffffff" stroke="#0a0a0a" stroke-width="3"/>
<rect x="414.6" y="639.5" width="8" height="4" fill="none" stroke="#0a0a0a" stroke-width="2"/>
<rect x="463.5" y="618.5" width="23" height="23" rx="2" fill="#fbfbfb" stroke="#0a0a0a" stroke-width="2.8"/>
<rect x="467" y="622.2" width="15.7" height="12.3" fill="#2a2a90"/><rect x="471" y="625.5" width="8" height="5.5" fill="#f8f0a0"/>
<rect x="464" y="641.5" width="22" height="7.5" fill="#6a6a6a"/><path d="M466.5,645 H483.5" stroke="#d0d0d0" stroke-width="1.6" stroke-dasharray="4 2"/>
<g stroke="#8a8886" stroke-width="2.2" fill="none"><path d="M514,629 V622 q0,-4 5,-4 h4 q5,0 5,4 V629"/><rect x="510.5" y="629" width="24" height="19.5" fill="#f8f8f6"/><path d="M514,634 H531 M514,639 H531 M514,644 H531"/></g>
<rect x="533" y="620" width="4" height="29" fill="#c8c8cc"/>
<rect x="555" y="619.5" width="30" height="30" fill="#c8c8cc"/>
<path d="M566,621 H585.5 M555,628.5 H566 M572,629 H585.5 M575,637 H585.5" stroke="#5a5c5a" stroke-width="2.6"/>
<path d="M569,628 L583,642 L577,642 L580,649 L576,649.5 L573,643 L569,647 Z" fill="#7c7c7c" stroke="#ffffff" stroke-width="1.2"/>
</svg>
</body></html>
